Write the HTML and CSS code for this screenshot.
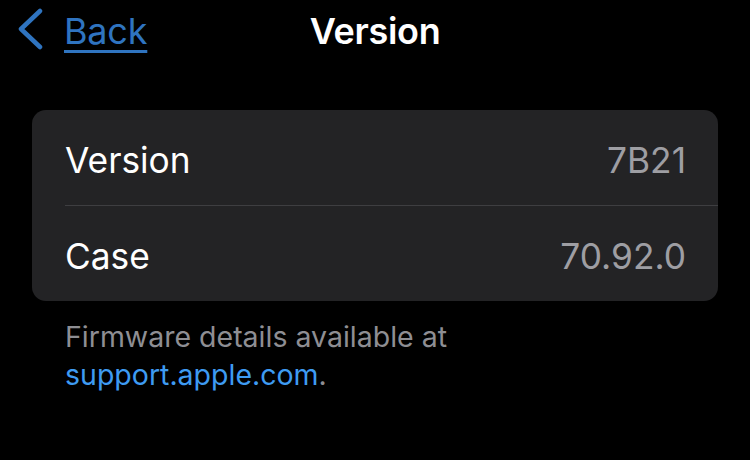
FILE: index.html
```html
<!DOCTYPE html>
<html>
<head>
<meta charset="utf-8">
<link rel="stylesheet" href="styles.css">
</head>
<body>
<header class="nav">
  <a class="back" href="#">
    <svg class="chev" width="30" height="44" viewBox="0 0 30 44"><path d="M24 3 L5 21 L24 39" fill="none" stroke="#2f74c0" stroke-width="4.5" stroke-linecap="round" stroke-linejoin="round"/></svg>
    <span class="back-text">Back</span>
  </a>
  <h1 class="title">Version</h1>
  <div class="spacer"></div>
</header>
<section class="card">
  <div class="row">
    <span class="label">Version</span>
    <span class="value">7B21</span>
  </div>
  <div class="row">
    <span class="label">Case</span>
    <span class="value">70.92.0</span>
  </div>
</section>
<p class="footer">Firmware details available at<br><a class="link" href="#">support.apple.com</a>.</p>
</body>
</html>
```
FILE: styles.css
```css
* { box-sizing: border-box; }
html, body { margin: 0; padding: 0; background: #000; }
body {
  width: 750px;
  height: 460px;
  overflow: hidden;
  font-family: Inter, "Noto Sans", sans-serif;
  color: #fff;
}
.nav {
  display: grid;
  grid-template-columns: 1fr auto 1fr;
  align-items: center;
  height: 61px;
}
.back {
  display: flex;
  align-items: center;
  gap: 18px;
  padding-left: 16px;
  color: #2f74c0;
  text-decoration: none;
}
.chev { display: block; margin-top: -1px; }
.back-text {
  font-size: 36px;
  text-decoration: underline;
  text-decoration-thickness: 3px;
  text-underline-offset: 6px;
  letter-spacing: -0.2px;
}
.title {
  margin: 0;
  font-size: 36px;
  font-weight: 600;
  letter-spacing: -0.3px;
}
.card {
  margin: 49px 32px 0 32px;
  background: #232325;
  border-radius: 14px;
  padding-left: 33px;
  overflow: hidden;
}
.row {
  display: flex;
  justify-content: space-between;
  align-items: center;
  height: 95px;
  padding: 5px 32px 0 0;
  font-size: 35.3px;
  letter-spacing: 0;
}
.row + .row { border-top: 1px solid #3e3e41; height: 96px; }
.label { color: #fff; }
.value { color: #9e9ea3; }
.footer {
  margin: 17px 0 0 65px;
  font-size: 28.5px;
  line-height: 38px;
  color: #8e8e93;
}
.link { color: #3e9bf2; text-decoration: none; }
```
